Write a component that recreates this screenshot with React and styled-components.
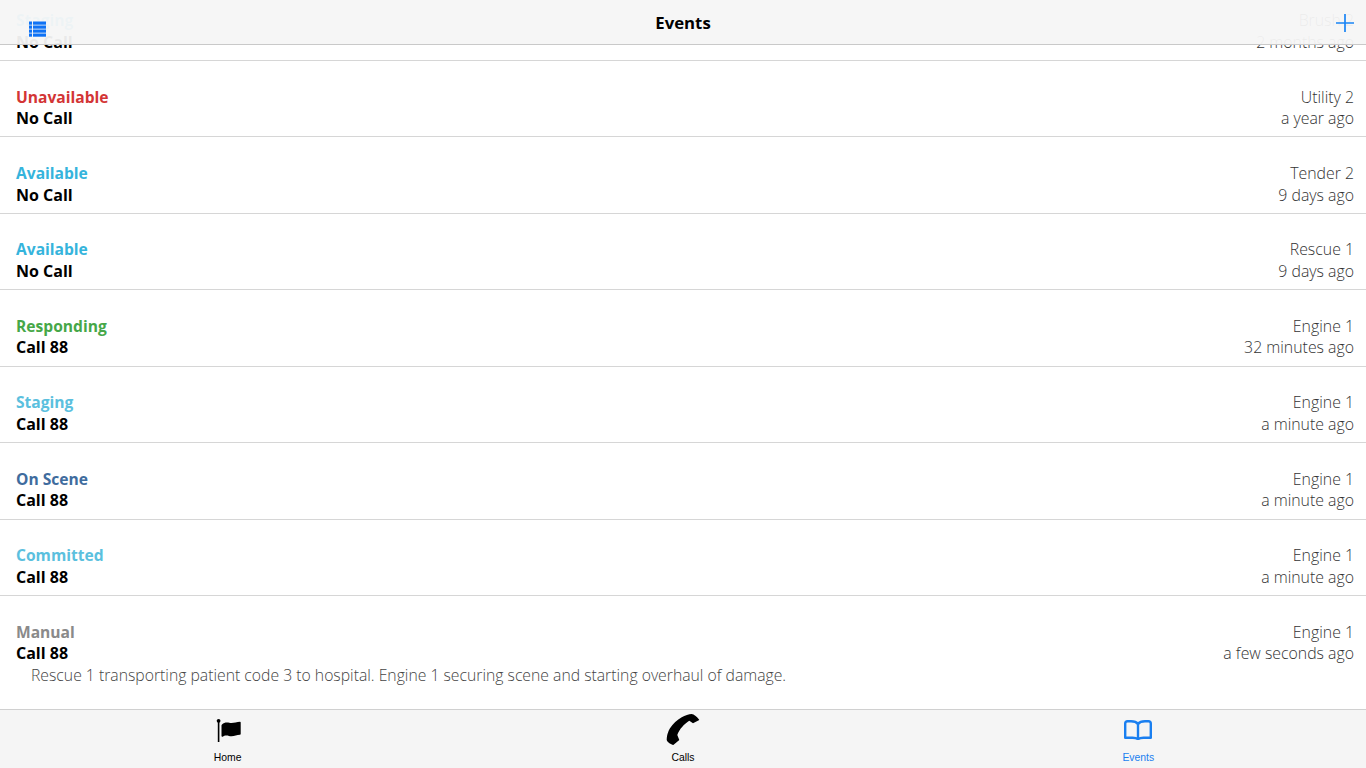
import React from "react";
import styled, { createGlobalStyle } from "styled-components";

const Global = createGlobalStyle`
  html, body { margin: 0; padding: 0; background: #fff; }
  body { font-family: "Open Sans", "Noto Sans", sans-serif; }
`;
const Page = styled.div`
  position: relative;
  height: 100vh;
  display: flex;
  flex-direction: column;
  overflow: hidden;
`;
const Header = styled.header`
  position: absolute;
  top: 0; left: 0; right: 0;
  height: 44px;
  z-index: 2;
  display: flex;
  align-items: center;
  justify-content: space-between;
  padding: 0 12px 0 28px;
  background: rgba(245, 245, 245, 0.95);
  border-bottom: 1px solid #c9c9c9;
`;
const HeaderTitle = styled.h1`
  position: absolute;
  left: 0; right: 0;
  margin: 1px 0 0;
  text-align: center;
  font-size: 16.8px;
  font-weight: 700;
  color: #000;
  pointer-events: none;
`;
const HeaderIcon = styled.svg`
  display: block;
  margin-top: ${p => p.$drop}px;
`;
const List = styled.main`
  flex: 1;
  min-height: 0;
  display: flex;
  flex-direction: column;
  justify-content: flex-end;
`;
const Row = styled.div`
  flex: none;
  display: flex;
  justify-content: space-between;
  box-sizing: border-box;
  height: ${p => (p.$note ? "113px" : "76.43px")};
  padding: 25.6px 12px 0 16px;
  border-bottom: ${p => (p.$note ? "none" : "1px solid #d6d6d6")};
  line-height: 21.5px;
  font-size: 15.75px;
`;
const Left = styled.div`
  flex: 1;
  min-width: 0;
`;
const Right = styled.div`
  text-align: right;
  color: #333;
  font-size: 15.85px;
  font-weight: 300;
  white-space: nowrap;
`;
const Status = styled.div`
  font-weight: 700;
  font-size: 15.6px;
  color: ${p => p.$color};
`;
const CallName = styled.div`
  font-weight: 700;
  font-size: 16px;
  color: #000;
`;
const Note = styled.div`
  padding-left: 15px;
  color: #444;
  font-weight: 300;
  white-space: nowrap;
`;
const TabBar = styled.nav`
  flex: none;
  height: 59px;
  box-sizing: border-box;
  display: grid;
  grid-template-columns: repeat(3, 1fr);
  background: #f5f5f5;
  border-top: 1px solid #d0d0d0;
`;
const Tab = styled.div`
  display: flex;
  flex-direction: column;
  align-items: center;
  color: ${p => (p.$active ? "#1a7ff0" : "#000")};
  font-family: "Liberation Sans", Arial, sans-serif;
  font-size: 10.4px;
`;
const TabIcon = styled.div`
  height: 40px;
  display: flex;
  align-items: center;
  justify-content: center;
`;
const TabLabel = styled.span`
  line-height: 11px;
  margin-top: 2px;
`;

const rows = [
  ["Staging", "#5bc0de", "No Call", "Brush 2", "2 months ago"],
  ["Unavailable", "#d33535", "No Call", "Utility 2", "a year ago"],
  ["Available", "#35b4dc", "No Call", "Tender 2", "9 days ago"],
  ["Available", "#35b4dc", "No Call", "Rescue 1", "9 days ago"],
  ["Responding", "#46a748", "Call 88", "Engine 1", "32 minutes ago"],
  ["Staging", "#5bc0de", "Call 88", "Engine 1", "a minute ago"],
  ["On Scene", "#3f6c9e", "Call 88", "Engine 1", "a minute ago"],
  ["Committed", "#5bc0de", "Call 88", "Engine 1", "a minute ago"],
  ["Manual", "#8a8a8a", "Call 88", "Engine 1", "a few seconds ago",
    "Rescue 1 transporting patient code 3 to hospital. Engine 1 securing scene and starting overhaul of damage."],
];

const ListIcon = () => (
  <HeaderIcon $drop={14} width="19" height="17" viewBox="0 0 19 17" fill="#0f72f5">
    {[0, 4, 8, 12].map(y => (
      <g key={y}>
        <rect x="1" y={y + 0.5} width="3" height="3.2" />
        <rect x="5" y={y + 0.5} width="13" height="3.2" />
      </g>
    ))}
  </HeaderIcon>
);
const PlusIcon = () => (
  <HeaderIcon $drop={2} width="20" height="20" viewBox="0 0 20 20" stroke="#1a85f5" strokeWidth="1.7">
    <path d="M11 1v18M2 10h18" />
  </HeaderIcon>
);
const FlagIcon = () => (
  <svg width="26" height="26" viewBox="0 0 26 26" fill="#000">
    <circle cx="3.6" cy="3.8" r="1.9" />
    <rect x="2.8" y="3" width="1.6" height="22" />
    <path d="M7 7.5c1.500-1.500 3-2 5-2 1.700 0 2.800.6 4.500.6 2.500 0 5.500-1.300 8.500-1.300.5 0 .7.300.7.800v11.300c0 .5-.3.800-.8.800-2.900.1-5.400 1.600-8.400 1.600-2 0-3.200-.8-5-.8-1.600 0-2.800.4-3.800 1.200-.6.300-1.200 0-1.200-.7V8.500c0-.4.200-.7.500-1z" />
  </svg>
);
const PhoneIcon = () => (
  <svg width="34" height="34" viewBox="0 0 34 34" fill="#000">
    <path d="M25.700 1 C27.500 1 32 4.500 33.300 7 L27 10.300 L23.300 7.700 C18.500 10.500 13 16.500 11.300 22 L13.300 27 L7.300 32 C5 31.500 1.500 29.500 .7 27 C1 21.500 2 19 4 15.300 C7 10.500 11 7 15.700 4.300 C19 2.500 23 1 25.700 1 Z" />
  </svg>
);
const BookIcon = () => (
  <svg width="28" height="20" viewBox="0 0 28 20" fill="none" stroke="#1a7ff0" strokeWidth="2.4" strokeLinejoin="round">
    <path d="M14 4C12.500 2 10 1.200 7 1.200H3.500C2 1.200 1.200 2 1.200 3.500v14.300H8.500c2.500 0 4.300.4 5.500 1.400 1.200-1 3-1.400 5.500-1.400h7.300V3.500c0-1.500-.8-2.300-2.300-2.300H21c-3 0-5.500.8-7 2.800z" />
    <path d="M14 4v15" />
  </svg>
);

export default function App() {
  return (
    <Page>
      <Global />
      <Header>
        <ListIcon />
        <HeaderTitle>Events</HeaderTitle>
        <PlusIcon />
      </Header>
      <List>
        {rows.map(([status, color, call, unit, time, note], i) => (
          <Row key={i} $note={!!note}>
            <Left>
              <Status $color={color}>{status}</Status>
              <CallName>{call}</CallName>
              {note && <Note>{note}</Note>}
            </Left>
            <Right>
              <div>{unit}</div>
              <div>{time}</div>
            </Right>
          </Row>
        ))}
      </List>
      <TabBar>
        <Tab>
          <TabIcon><FlagIcon /></TabIcon>
          <TabLabel>Home</TabLabel>
        </Tab>
        <Tab>
          <TabIcon><PhoneIcon /></TabIcon>
          <TabLabel>Calls</TabLabel>
        </Tab>
        <Tab $active>
          <TabIcon><BookIcon /></TabIcon>
          <TabLabel>Events</TabLabel>
        </Tab>
      </TabBar>
    </Page>
  );
}
